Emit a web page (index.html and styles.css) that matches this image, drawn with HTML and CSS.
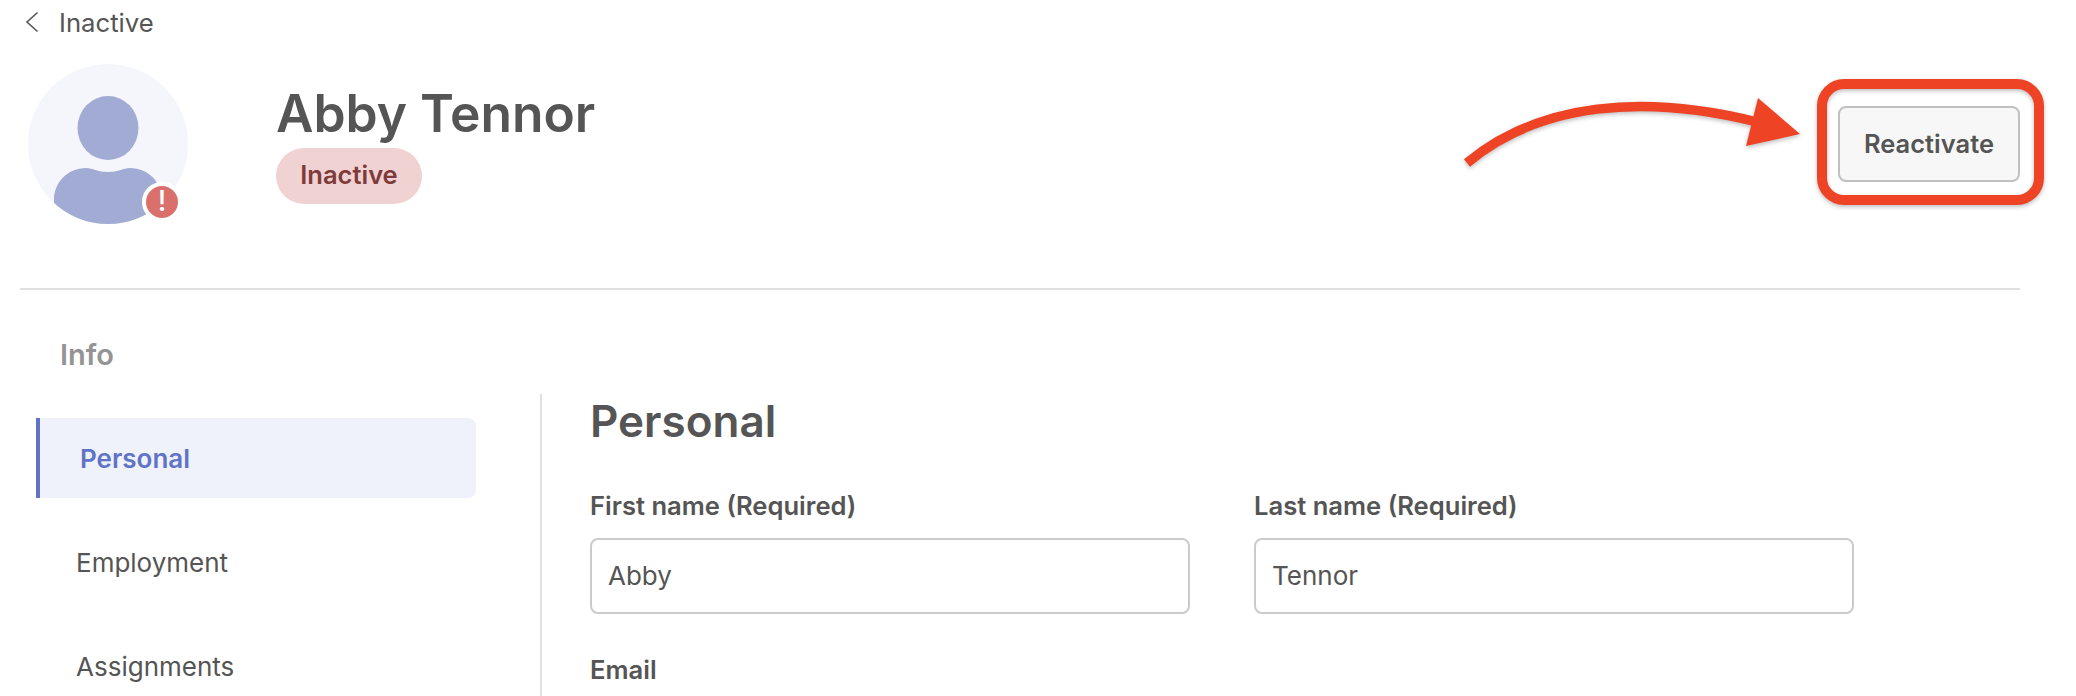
FILE: index.html
```html
<!DOCTYPE html>
<html lang="en">
<head>
<meta charset="utf-8">
<title>Abby Tennor</title>
<link rel="stylesheet" href="styles.css">
</head>
<body>
<div class="page">
  <a class="back">
    <svg class="chevron" viewBox="0 0 14 22" width="14" height="22"><path d="M12.5 1.5 2 11l10.5 9.5" fill="none" stroke="#555" stroke-width="1.6"/></svg>
    <span>Inactive</span>
  </a>
  <header class="header">
    <div class="avatar">
      <svg viewBox="0 0 160 160" width="160" height="160">
        <defs><clipPath id="disc"><circle cx="80" cy="80" r="80"/></clipPath></defs>
        <circle cx="80" cy="80" r="80" fill="#f4f6fc"/>
        <ellipse cx="80" cy="64" rx="30.5" ry="32" fill="#a1abd3"/>
        <path d="M26 136C26 118 40 104 58 104C65 104 69 108 80 108C91 108 95 104 102 104C120 104 134 118 134 136V160H26Z" fill="#a1abd3" clip-path="url(#disc)"/>
      </svg>
      <span class="alert">!</span>
    </div>
    <div class="identity">
      <h1>Abby Tennor</h1>
      <span class="pill">Inactive</span>
    </div>
    <button class="reactivate">Reactivate</button>
  </header>
  <div class="rule"></div>
  <h2 class="section">Info</h2>
  <div class="columns">
    <nav class="nav">
      <a class="nav-item active">Personal</a>
      <a class="nav-item">Employment</a>
      <a class="nav-item">Assignments</a>
    </nav>
    <main class="content">
      <h3>Personal</h3>
      <div class="fields">
        <label class="field"><span>First name (Required)</span><input value="Abby"></label>
        <label class="field"><span>Last name (Required)</span><input value="Tennor"></label>
      </div>
      <div class="email">Email</div>
    </main>
  </div>
  <svg class="annotation" viewBox="0 0 2076 696" width="2076" height="696">
    <rect x="1822" y="84" width="217" height="116" rx="22" fill="none" stroke="#ee4325" stroke-width="10"/>
    <path d="M1467 163C1540 102 1645 94 1757 122" fill="none" stroke="#ee4325" stroke-width="9.5"/>
    <polygon points="1758,98 1800,134 1746,146" fill="#ee4325"/>
  </svg>
</div>
</body>
</html>
```
FILE: styles.css
```css
* { box-sizing: border-box; }
html, body { margin: 0; height: 696px; overflow: hidden; background: #fff; }
body { font-family: "Inter", "Liberation Sans", sans-serif; color: #555; font-size: 26px; }
.page { position: relative; width: 2076px; height: 696px; overflow: hidden; }
.back { display: flex; align-items: center; gap: 20px; height: 44px; padding-left: 25px; font-size: 25.7px; }
.chevron { display: block; }
.header { display: flex; align-items: flex-start; height: 244px; padding: 20px 56px 0 28px; }
.avatar { position: relative; width: 160px; height: 160px; flex: none; }
.avatar svg { display: block; }
.alert { position: absolute; left: 114px; top: 118px; width: 40px; height: 40px; border: 4px solid #fff; border-radius: 50%; background: #d9706c; color: #fff; font-weight: 500; font-size: 28px; line-height: 31px; text-align: center; }
.identity { margin-left: 88px; padding-top: 16px; }
h1 { margin: 0 0 2px; font-size: 51.5px; line-height: 66px; font-weight: 600; }
.pill { display: block; width: 146px; height: 56px; border-radius: 28px; background: #f0d2d3; color: #7f3a3a; font-size: 25.5px; font-weight: 600; line-height: 54px; text-align: center; }
.reactivate { margin: 42px 0 0 auto; width: 182px; height: 76px; padding: 0 0 2px; border: 2px solid #c0c0c0; border-radius: 8px; background: #f7f7f7; color: #555; font: 600 25.5px "Inter", "Liberation Sans", sans-serif; }
.rule { height: 2px; margin: 0 56px 0 20px; background: #e0e0e0; }
.section { margin: 48px 0 0 60px; font-size: 29px; line-height: 34px; font-weight: 600; color: #949494; }
.columns { display: flex; margin-top: 22px; }
.nav { width: 542px; flex: none; padding: 24px 64px 0 36px; border-right: 2px solid #e0e0e0; height: 320px; display: flex; flex-direction: column; gap: 24px; }
.nav-item { display: flex; align-items: center; height: 80px; padding-left: 40px; }
.active { padding-left: 40px; border-left: 4px solid #5f74c6; border-radius: 0 8px 8px 0; background: #eff2fa; color: #5f74c6; font-weight: 600; }
.content { flex: none; padding-left: 48px; }
h3 { margin: 0; font-size: 44px; line-height: 54px; font-weight: 600; }
.fields { display: flex; gap: 64px; margin-top: 42px; }
.field { display: flex; flex-direction: column; width: 600px; }
.field span, .email { font-size: 25.6px; font-weight: 600; line-height: 32px; }
.field input { margin-top: 16px; height: 76px; border: 2px solid #cbcbcb; border-radius: 8px; padding: 0 16px 2px; font: 26px "Inter", "Liberation Sans", sans-serif; color: #555; }
.email { margin-top: 40px; }
.annotation { position: absolute; left: 0; top: 0; pointer-events: none; filter: drop-shadow(0 2px 2px rgba(0,0,0,.25)); }
```
